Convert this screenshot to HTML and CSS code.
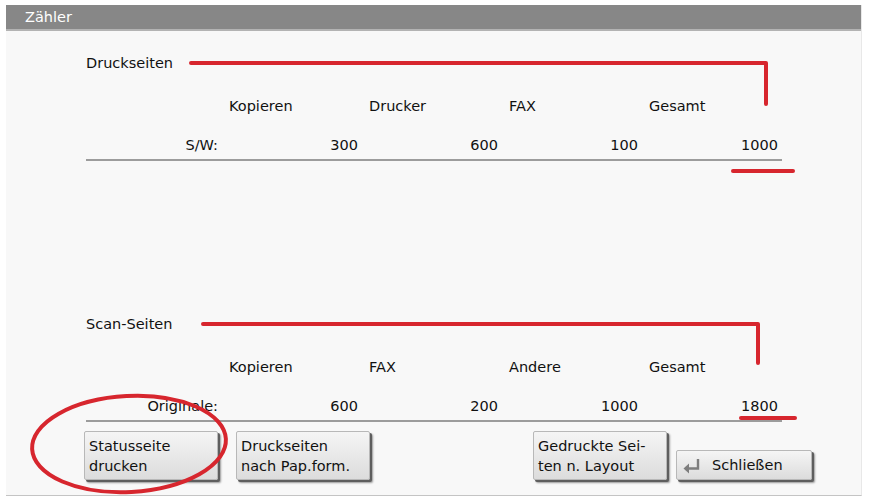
FILE: index.html
```html
<!DOCTYPE html>
<html lang="de">

<head>
    <meta charset="UTF-8">
    <title>Zähler</title>
    <link rel="stylesheet" href="styles.css">
</head>

<body>
    <div class="panel">
        <div class="panel-header">Zähler</div>

        <div class="panel-body">
            <div class="counter-section first">
                <div class="section-title">Druckseiten</div>
                <div class="counter-row head">
                    <div></div>
                    <div class="col-head">Kopieren</div>
                    <div class="col-head">Drucker</div>
                    <div class="col-head">FAX</div>
                    <div class="col-head">Gesamt</div>
                </div>
                <div class="counter-row data">
                    <div class="row-label">S/W:</div>
                    <div class="num">300</div>
                    <div class="num">600</div>
                    <div class="num">100</div>
                    <div class="num">1000</div>
                </div>
            </div>

            <div class="counter-section second">
                <div class="section-title">Scan-Seiten</div>
                <div class="counter-row head">
                    <div></div>
                    <div class="col-head">Kopieren</div>
                    <div class="col-head">FAX</div>
                    <div class="col-head">Andere</div>
                    <div class="col-head">Gesamt</div>
                </div>
                <div class="counter-row data">
                    <div class="row-label">Originale:</div>
                    <div class="num">600</div>
                    <div class="num">200</div>
                    <div class="num">1000</div>
                    <div class="num">1800</div>
                </div>
            </div>

            <div class="button-bar">
                <button class="btn btn-status">Statusseite<br>drucken</button>
                <button class="btn btn-paper">Druckseiten<br>nach Pap.form.</button>
                <button class="btn btn-layout">Gedruckte Sei-<br>ten n. Layout</button>
                <button class="btn btn-close">
                    <svg class="return-icon" width="19" height="17" viewBox="0 0 19 17">
                        <path d="M16 1 V10.5 H6" fill="none" stroke="#7d7d7d" stroke-width="2.4"/>
                        <path d="M7 5.5 L1.5 10.5 L7 15.5 Z" fill="#7d7d7d"/>
                    </svg>
                    <span>Schließen</span>
                </button>
            </div>
        </div>
    </div>

    <!-- red marker annotations drawn over the screen -->
    <svg class="markup" width="872" height="498" viewBox="0 0 872 498">
        <g fill="none" stroke="#d7262e" stroke-width="4" stroke-linecap="round" stroke-linejoin="round">
            <polyline points="191,63 766,63 766,104"/>
            <line x1="733" y1="171" x2="793" y2="171"/>
            <polyline points="203,324 758,324 758,363"/>
            <line x1="741" y1="418" x2="795" y2="418"/>
            <ellipse cx="129" cy="444" rx="97" ry="48" transform="rotate(-3 129 444)"/>
        </g>
    </svg>
</body>

</html>
```

FILE: styles.css
```css
* {
    box-sizing: border-box;
}

body {
    margin: 0;
    background-color: #fff;
    font-family: "DejaVu Sans", Verdana, sans-serif;
    font-size: 14.5px;
    color: #111;
}

.panel {
    margin: 5px 0 0 6px;
    width: 856px;
    height: 491px;
    background-color: #f8f8f8;
    border-right: 1px solid #e8e8e8;
    border-bottom: 1px solid #c4c4c4;
}

.panel-header {
    height: 26px;
    line-height: 24px;
    padding-left: 19px;
    background-color: #878787;
    border-bottom: 2px solid #b3b3b3;
    color: #fff;
}

.panel-body {
    padding-left: 80px;
}

.counter-section.first {
    padding-top: 22px;
}

.counter-section.second {
    margin-top: 153px;
}

.section-title {
    line-height: 20px;
}

.counter-row {
    display: grid;
    grid-template-columns: 133px repeat(4, 140px);
    width: 696px;
    line-height: 20px;
}

.counter-row.head {
    margin-top: 23px;
}

.counter-row.data {
    margin-top: 19px;
    padding-bottom: 4px;
    border-bottom: 2px solid #9c9c9c;
}

.col-head {
    padding-left: 10px;
}

.row-label,
.num {
    text-align: right;
    padding-right: 1px;
}

.button-bar {
    display: flex;
    align-items: flex-end;
    margin-top: 9px;
    margin-left: -2px;
}

.btn {
    width: 134px;
    height: 49px;
    padding: 3px 4px;
    font-family: inherit;
    font-size: 14.5px;
    line-height: 20px;
    color: #111;
    text-align: left;
    background: linear-gradient(#f5f5f5, #dcdcdc);
    border: 1px solid #b8b8b8;
    border-radius: 2px;
    box-shadow: 2px 2px 0 #5e5e5e, 3px 3px 2px #999;
}

.btn-paper {
    margin-left: 18px;
}

.btn-layout {
    margin-left: 163px;
}

.btn-close {
    margin-left: 9px;
    width: 136px;
    height: 30px;
    display: flex;
    align-items: center;
    padding: 0 5px;
}

.return-icon {
    margin-right: 11px;
    margin-top: 3px;
}

.markup {
    position: absolute;
    left: 0;
    top: 0;
    pointer-events: none;
}
```
